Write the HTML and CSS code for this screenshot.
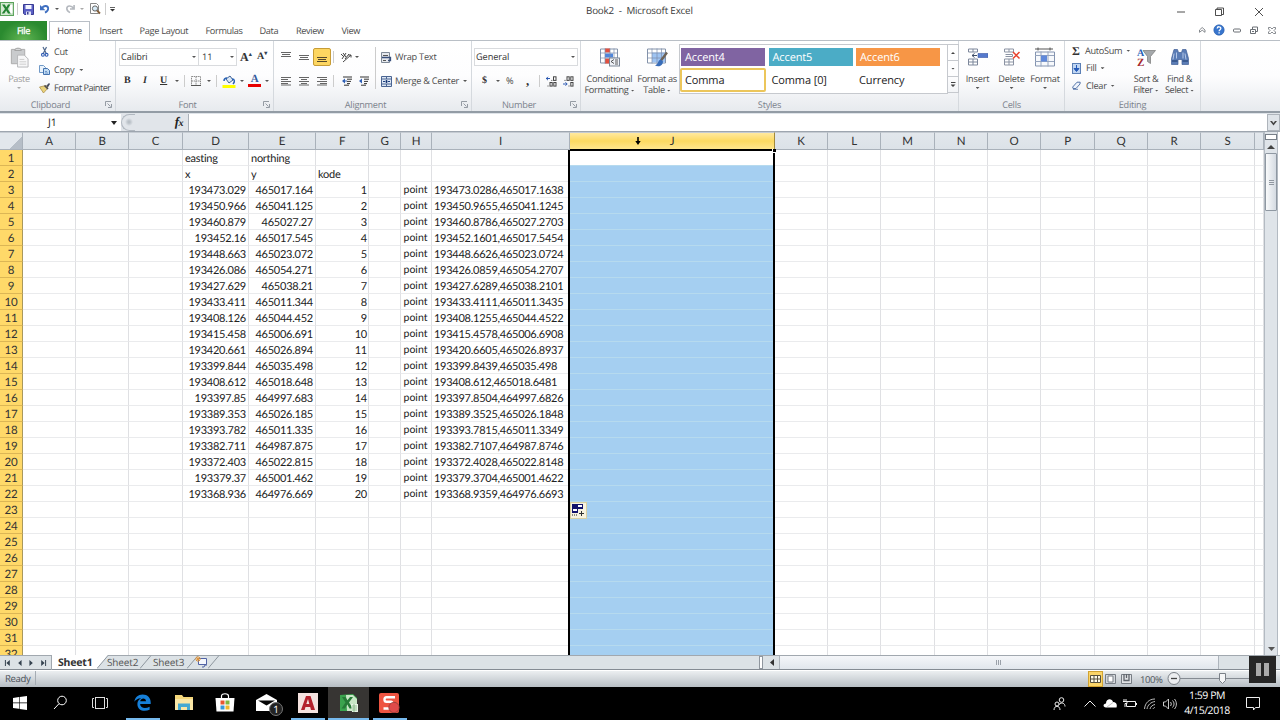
FILE: index.html
```html
<!DOCTYPE html>
<html lang="en">
<head>
<meta charset="utf-8">
<title>Book2 - Microsoft Excel</title>
<link rel="stylesheet" href="styles.css">
</head>
<body>
<div class="app">
  <header class="titlebar">
    <div class="qat">
      <svg class="logo" width="14" height="14" viewBox="0 0 14 14"><rect x=".5" y=".5" width="13" height="13" fill="#d5ead3" stroke="#5ba35c"/><path d="M9 2h4v10H9z" fill="#fff" stroke="#7cb67c" stroke-width=".6"/><path d="M2 2.500h2.800L6.300 5.300 8 2.500h2.500L7.600 7l3.200 4.500H8L6.200 8.600 4.300 11.500H1.700L5 7z" fill="#238332"/></svg>
      <i class="sep q1"></i>
      <svg class="q2" width="11" height="11" viewBox="0 0 11 11"><path d="M.5.5h10v10h-9l-1-1z" fill="#5a5fc4" stroke="#393c94"/><path d="M2.500 1h6v4h-6z" fill="#f3f5ff"/><path d="M3 7.500h5V11H3z" fill="#dfe3f5"/><path d="M4 8h1.500v2.500H4z" fill="#3c4091"/></svg>
      <svg class="q3" width="10" height="10" viewBox="0 0 11 11"><path d="M0 1v6h6z" fill="#3f6fc0"/><path d="M2 5C4 1 9 1.500 9 5c0 2-1.500 3.500-3.500 4.500" fill="none" stroke="#3f6fc0" stroke-width="2"/></svg>
      <i class="caret q4"></i>
      <svg class="q5" width="10" height="10" viewBox="0 0 11 11"><path d="M10 1v4.500H5.500M9.500 5C7 1 2 1.500 2 5c0 2 1.500 3.500 3.500 4.500" fill="none" stroke="#b5b9bf" stroke-width="1.800"/></svg>
      <i class="caret dim q6"></i>
      <svg class="q7" width="12" height="12" viewBox="0 0 12 12"><path d="M1.500.5h6l2 2v8h-8z" fill="#fff" stroke="#888"/><circle cx="6" cy="5.500" r="2.600" fill="#d9ecf8" stroke="#666"/><path d="M8 7.500l3 3" stroke="#84603b" stroke-width="1.800"/></svg>
      <i class="sep q8"></i>
      <svg class="q9" width="5" height="5" viewBox="0 0 6 6"><path d="M0 .5h6" stroke="#333"/><path d="M0 2.500h6l-3 3z" fill="#333"/></svg>
    </div>
    <div class="title">Book2&nbsp; -&nbsp; Microsoft Excel</div>
    <svg class="winctl" width="88" height="20" viewBox="0 0 88 20" fill="none" stroke="#222"><path d="M1 12h8M39.500 9.500h6v6h-6zM41 9V8h6.500v6.500H46M79 8l8 8M87 8l-8 8" stroke-width=".8"/></svg>
  </header>

  <nav class="tabs">
    <span class="file">File</span><span class="home">Home</span><span class="t-insert">Insert</span><span class="t-layout">Page Layout</span><span class="t-formulas">Formulas</span><span class="t-data">Data</span><span class="t-review">Review</span><span class="t-view">View</span>
    <svg class="docctl" width="80" height="20" viewBox="0 0 80 20" fill="none" stroke="#6a6f75"><path d="M1.500 10l2.700-2.500L7 10v2.300L4.200 10.200 1.500 12.300z" stroke-width=".8"/><circle cx="21" cy="10" r="5.200" fill="#3775cd" stroke="#265ba8" stroke-width=".6"/><path d="M19.200 8.500c.1-2.400 3.700-2.200 3.600 0 0 1.200-1.700 1.200-1.700 2.800M21.100 12.300v1.200" stroke="#fff" stroke-width="1.300"/><rect x="35.500" y="9" width="7" height="3" rx="1"/><path d="M52.500 9.500h5v4h-5zM54.500 9V7h5v4.500H58M54 11.500h2" /><path d="M70.500 7.500h2l1.500 1.500 1.500-1.500h2v1.500L76 10.500l1.500 1.500v1.500h-2L74 12l-1.500 1.500h-2V12l1.500-1.500L70.500 9z" stroke-width=".8"/></svg>
  </nav>

  <section class="ribbon">
    <div class="group g-clip">
      <div class="body">
        <div class="big paste">
          <svg width="20" height="22" viewBox="0 0 20 22"><path d="M2 2.500h14v15H2z" fill="#c9cbcd" stroke="#aaa"/><path d="M5.500 3.500c0-3 7-3 7 0z" fill="#e3e4e5" stroke="#999"/><path d="M8.500 8.500h7l4 4v8.500h-11z" fill="#f7f7f8" stroke="#b4b6b8"/><path d="M10.500 13h5M10.500 15.500h7M10.500 18h7" stroke="#ccc"/></svg>
          <span>Paste</span><i class="caret dim"></i>
        </div>
        <div class="stack">
          <div class="cmd"><svg width="13" height="12" viewBox="0 0 13 12"><path d="M5 1l3 6M8.500 1L5.500 7" stroke="#50698e" stroke-width="1.200"/><circle cx="4.900" cy="8.800" r="1.400" fill="none" stroke="#2d5ab2" stroke-width="1.100"/><circle cx="8.600" cy="8.800" r="1.400" fill="none" stroke="#2d5ab2" stroke-width="1.100"/></svg><span>Cut</span></div>
          <div class="cmd"><svg width="13" height="12" viewBox="0 0 13 12"><path d="M1.500 1.500h4l2 2v5h-6z" fill="#eaf3fc" stroke="#7099c7"/><path d="M5.500 4.500h4l2 2v4H5.500z" fill="#c3ddf4" stroke="#4573af"/><path d="M7 7.500h2M7 9h3" stroke="#5a85bd" stroke-width=".8"/></svg><span>Copy</span><i class="caret"></i></div>
          <div class="cmd"><svg width="13" height="12" viewBox="0 0 13 12"><path d="M8 4l3-3 1 1-2.500 4z" fill="#444b60"/><path d="M1.500 5L8 3.500l2 2.500-4.500 5z" fill="#ead37b" stroke="#a58640" stroke-width=".7"/><path d="M6.500 3.500L10 7" stroke="#4d4d55" stroke-width="1.600"/></svg><span class="painter">Format Painter</span></div>
        </div>
      </div>
      <div class="label">Clipboard<svg class="launch" width="7" height="7" viewBox="0 0 7 7"><path d="M.5 5V.5H6M2.500 2.500l3 3M6.500 3v3.500H3" fill="none" stroke="#8b929b" stroke-width=".9"/></svg></div>
    </div>

    <div class="group g-font">
      <div class="body col">
        <div class="row">
          <div class="combo c-font"><span>Calibri</span><i class="caret"></i></div><div class="combo c-size"><span>11</span><i class="caret"></i></div>
          <span class="serif grow">A<sup>▴</sup></span><span class="serif shrink">A<sup>▾</sup></span>
        </div>
        <div class="row">
          <b class="serif b1">B</b><b class="serif it">I</b><b class="serif un">U</b><i class="caret m1"></i><i class="sep m2"></i>
          <svg class="m3" width="10" height="10" viewBox="0 0 10 10"><path d="M.5.5h9v9h-9zM5 .5v9M.5 5h9" fill="none" stroke="#8b8b8b" stroke-dasharray="1.500 .7"/><path d="M0 9.500h10" stroke="#555"/></svg><i class="caret m4"></i><i class="sep m5"></i>
          <svg class="m6" width="14" height="13" viewBox="0 0 14 13"><path d="M4 4l4-3 3 4-4 3z" fill="#dce8f5" stroke="#3c6096"/><path d="M2 6c0-3 3-3 3-3M10 4c3 0 3 3 1 5" stroke="#2962b5" stroke-width="1.500" fill="none"/><path d="M.5 10h13v3H.5z" fill="#ff0"/></svg><i class="caret m7"></i>
          <span class="fontcolor">A</span><i class="caret m8"></i>
        </div>
      </div>
      <div class="label">Font<svg class="launch" width="7" height="7" viewBox="0 0 7 7"><path d="M.5 5V.5H6M2.500 2.500l3 3M6.500 3v3.500H3" fill="none" stroke="#8b929b" stroke-width=".9"/></svg></div>
    </div>

    <div class="group g-align">
      <div class="body">
        <div class="col aligns">
          <div class="row">
            <svg class="al" width="18" height="18" viewBox="0 0 18 18"><path d="M4 4.500h10M5 6.500h8M4 8.500h10" stroke="#666"/></svg>
            <svg class="al" width="18" height="18" viewBox="0 0 18 18"><path d="M4 7.500h10M5 9.500h8M4 11.500h10" stroke="#666"/></svg>
            <svg class="al on" width="18" height="18" viewBox="0 0 18 18"><rect x=".5" y=".5" width="17" height="17" rx="1.500" fill="#fdd661" stroke="#c79c36"/><path d="M4 9.500h10M5 11.500h8M4 13.500h10" stroke="#55482a"/></svg>
            <i class="sep a1"></i>
            <svg class="a2" width="12" height="12" viewBox="0 0 12 12"><path d="M1 3l3 3M3 2l3 4M2 8l4-6M5 8l4-5M3 11L11 4M8.500 4H11v2.500" stroke="#444" fill="none"/></svg><i class="caret a3"></i>
          </div>
          <div class="row">
            <svg class="al" width="18" height="18" viewBox="0 0 18 18"><path d="M4 5.500h10M4 7.500h7M4 9.500h10M4 11.500h7M4 13h10" stroke="#666"/></svg>
            <svg class="al" width="18" height="18" viewBox="0 0 18 18"><path d="M4 5.500h10M6 7.500h6M4 9.500h10M6 11.500h6M4 13h10" stroke="#666"/></svg>
            <svg class="al" width="18" height="18" viewBox="0 0 18 18"><path d="M4 5.500h10M7 7.500h7M4 9.500h10M7 11.500h7M4 13h10" stroke="#666"/></svg>
            <i class="sep a1"></i>
            <svg class="a4" width="11" height="10" viewBox="0 0 11 10"><path d="M1 1h9M5 3.200h5M5 5.400h4M5 7.600h3M2 9.200h5" stroke="#333"/><path d="M0 5l3-2.500v5z" fill="#2e5fb5"/><path d="M3 5h2" stroke="#2e5fb5"/></svg>
            <svg class="a5" width="11" height="10" viewBox="0 0 11 10"><path d="M1 1h9M5 3.200h5M5 5.400h4M5 7.600h3M2 9.200h5" stroke="#333"/><path d="M0 5l3-2.500v5z" fill="#2e5fb5"/></svg>
          </div>
        </div>
        <i class="sep tall"></i>
        <div class="col wraps">
          <div class="row"><svg width="11" height="11" viewBox="0 0 11 11"><path d="M.5.5h8v10h-8z" fill="#e6e9ee" stroke="#7d8896"/><path d="M2 3.500h5M2 8.500h3" stroke="#555"/><path d="M1 5.500h8.500v3H7" fill="none" stroke="#384f7c" stroke-width="1.300"/></svg><span>Wrap Text</span></div>
          <div class="row"><svg width="11" height="11" viewBox="0 0 11 11"><path d="M.5.5h10v10H.5z" fill="#dce6f4" stroke="#4a6492"/><path d="M.5 3h10M.5 8h10M5.500 .5v2.500M5.500 8v2.500" stroke="#4a6492"/><path d="M2 5.500h2M7 5.500h2M5 4.500h1v2H5z" stroke="#1c3f7f"/></svg><span>Merge &amp; Center</span><i class="caret"></i></div>
        </div>
      </div>
      <div class="label">Alignment<svg class="launch" width="7" height="7" viewBox="0 0 7 7"><path d="M.5 5V.5H6M2.500 2.500l3 3M6.500 3v3.500H3" fill="none" stroke="#8b929b" stroke-width=".9"/></svg></div>
    </div>

    <div class="group g-num">
      <div class="body col">
        <div class="row"><div class="combo c-num"><span>General</span><i class="caret"></i></div></div>
        <div class="row"><b class="serif n1">$</b><i class="caret n2"></i><span class="n3">%</span><b class="serif n4">,</b><i class="sep n5"></i>
          <svg class="d1" width="11" height="11" viewBox="0 0 11 11" fill="none" stroke="#444"><path d="M0 2.500h4M2 .8L.3 2.500 2 4.200" stroke="#2c59b2"/><rect x="7.500" y=".8" width="2.500" height="3.600"/><rect x="4" y="6.500" width="2.200" height="3.600"/><rect x="7.800" y="6.500" width="2.200" height="3.600"/><path d="M5.300 4.400h1M1.500 10h1"/></svg>
          <svg class="d2" width="11" height="11" viewBox="0 0 11 11" fill="none" stroke="#444"><rect x="4" y=".8" width="2.200" height="3.600"/><rect x="7.800" y=".8" width="2.200" height="3.600"/><path d="M1.500 4.400h1M5.500 10h1"/><rect x="7.800" y="6.500" width="2.200" height="3.600"/><path d="M0 8h4M2.500 6.300L4.200 8 2.500 9.700" stroke="#2c59b2"/></svg></div>
      </div>
      <div class="label">Number<svg class="launch" width="7" height="7" viewBox="0 0 7 7"><path d="M.5 5V.5H6M2.500 2.500l3 3M6.500 3v3.500H3" fill="none" stroke="#8b929b" stroke-width=".9"/></svg></div>
    </div>

    <div class="group g-style">
      <div class="body">
        <div class="big cf">
          <svg width="22" height="20" viewBox="0 0 22 20"><path d="M1.500 1.500h17v14h-17z" fill="#fff" stroke="#8493aa"/><path d="M6 1h5v4H6zM6 11h5v5H6z" fill="#e3503f"/><path d="M6 6h8v4H6z" fill="#4d86dd"/><path d="M1 5.500h18M1 10.500h18M6 1v15M11 1v15M15 1v15" stroke="#7b8cac" stroke-width=".7"/><rect x="10.500" y="10.500" width="10" height="8" fill="#eef1f6" stroke="#7d8797"/><path d="M15 12l-3 2 3 2M16 12.500h3M16 14.500h3M16 16.500h3" stroke="#333" fill="none" stroke-width=".8"/></svg>
          <span>Conditional</span><span>Formatting <i class="caret"></i></span>
        </div>
        <div class="big ft">
          <svg width="22" height="20" viewBox="0 0 22 20"><path d="M1.500 1.500h18v14h-18z" fill="#fff" stroke="#8493aa"/><path d="M6 5h13v10H6z" fill="#9fc4f2"/><path d="M1 5.500h19M1 10.500h19M6 1v15M11 1v15M15.500 1v15" stroke="#7b8cac" stroke-width=".7"/><path d="M21 5l-6 8" stroke="#6d6257" stroke-width="2.400"/><path d="M15 12c-3 0-2 4-6 6 4 2 8 0 8-4z" fill="#386cb8"/></svg>
          <span>Format as</span><span>Table <i class="caret"></i></span>
        </div>
        <div class="gallery">
          <div class="sw purple">Accent4</div><div class="sw teal">Accent5</div><div class="sw orange">Accent6</div>
          <div class="sw picked">Comma</div><div class="sw">Comma [0]</div><div class="sw">Currency</div>
        </div>
        <div class="spin"><i><b class="up"></b></i><i><b></b></i><i><b class="more"></b></i></div>
      </div>
      <div class="label">Styles</div>
    </div>

    <div class="group g-cells">
      <div class="body">
        <div class="big ins"><svg width="20" height="20" viewBox="0 0 20 20"><path d="M.5 1.500h9v3h-9zM5 1.500v3M.5 11.500h9v6h-9zM5 11.500v6M.5 14.500h9" fill="#fff" stroke="#7d879b"/><path d="M10 6h10v4H10z" fill="#5579cd" stroke="#3b58a2" stroke-width=".6"/><path d="M4 8h5M6.500 6L4 8l2.500 2" fill="none" stroke="#3e4d68"/></svg><span>Insert</span><i class="caret"></i></div>
        <div class="big del"><svg width="20" height="20" viewBox="0 0 20 20"><path d="M2.500 1.500h9v3h-9zM7 1.500v3M2.500 11.500h9v6h-9zM7 11.500v6M2.500 14.500h9M3.500 7h7v2h-7" fill="#fff" stroke="#8b93a3"/><path d="M11 4.500l6.500 6.500M17.500 4.500L11 11" stroke="#e8402c" stroke-width="1.500"/></svg><span>Delete</span><i class="caret"></i></div>
        <div class="big fmt"><svg width="22" height="20" viewBox="0 0 22 20"><path d="M1 1.500h18M4 0v3M16 0v3" stroke="#555"/><path d="M1.500 4.500h19v14h-19z" fill="#f7f9fc" stroke="#8494b0"/><path d="M1 8h19M1 14h19M7 4v15M14 4v15" stroke="#96a4bd"/><path d="M7 8h6v6H7z" fill="#5f88da"/></svg><span>Format</span><i class="caret"></i></div>
      </div>
      <div class="label">Cells</div>
    </div>

    <div class="group g-edit">
      <div class="body">
        <div class="stack ed">
          <div class="cmd"><b class="serif sig">Σ</b><span>AutoSum</span><i class="caret"></i></div>
          <div class="cmd"><svg width="9" height="11" viewBox="0 0 9 11"><rect x=".5" y=".5" width="8" height="10" fill="#bfd5f2" stroke="#5b7fb5"/><path d="M4.500 2v4M2 5.500h5L4.500 8.500z" fill="#2459b8" stroke="#2459b8"/></svg><span>Fill</span><i class="caret"></i></div>
          <div class="cmd"><svg width="9" height="9" viewBox="0 0 9 9"><path d="M.7 6L5 1.200h3.200L8 3 4 7.500H1z" fill="#eef3fb" stroke="#5575a9"/><path d="M1 8.300h5" stroke="#6885b5"/></svg><span>Clear</span><i class="caret"></i></div>
        </div>
        <div class="big sort"><svg width="20" height="20" viewBox="0 0 20 20"><path d="M7 3h12.500l-5 6v7l-3-2V9z" fill="#a5a8ab" stroke="#777" stroke-width=".7"/><text x="1" y="8.500" class="az a">A</text><text x="1" y="18" class="az z">Z</text></svg><span>Sort &amp;</span><span>Filter <i class="caret"></i></span></div>
        <div class="big find"><svg width="20" height="20" viewBox="0 0 20 20"><path d="M4 2h3.500l1 3h3l1-3H16l2.500 9v6h-6.500v-5H8v5H1.500v-6z" fill="#5a7cb5" stroke="#405f97" stroke-width=".7"/><path d="M4 6l-1 6M15 6l1 6M6.500 5v6M13 5v6" stroke="#b5c8e8"/><path d="M2 13.500h5.500M12.500 13.500H18" stroke="#2f4d82" stroke-width="1.500"/></svg><span>Find &amp;</span><span>Select <i class="caret"></i></span></div>
      </div>
      <div class="label">Editing</div>
    </div>
  </section>

  <section class="formula">
    <div class="namebox"><span>J1</span><svg width="6" height="4" viewBox="0 0 6 4"><path d="M0 0h6L3 4z" fill="#222"/></svg></div>
    <div class="fx"><i></i><em>f<small>x</small></em></div>
    <div class="entry"></div>
    <div class="expand"><svg width="7" height="6" viewBox="0 0 7 6"><path d="M0 1h2l1.500 2L5 1h2L3.500 5.500z" fill="#444"/></svg></div>
  </section>

  <main class="sheet">
    <div class="grid" id="grid"></div>
    <div class="vscroll"><div class="split"></div><div class="arr"><svg width="8" height="4"><path d="M0 4h8L4 0z" fill="#444"/></svg></div><div class="thumb"><svg width="5" height="5"><path d="M0 .5h5M0 2.500h5M0 4.500h5" stroke="#9097a0"/></svg></div><div class="arr end"><svg width="7" height="4"><path d="M0 0h7L3.500 4z" fill="#555"/></svg></div></div>
    <svg class="fill-tag" width="17" height="17" viewBox="0 0 17 17"><rect x=".5" y=".5" width="16" height="16" fill="#f7f3df" stroke="#d9d0a2"/><path d="M2 2h11v5H8v4H2z" fill="#12126b"/><path d="M8 3h4v2H8zM3 7h4v2H3z" fill="#fff"/><path d="M2 13h6" stroke="#222" stroke-dasharray="1 1"/><path d="M9 11.500h5M11.500 9v5" stroke="#333"/></svg>
    <svg class="cursor" width="6" height="8" viewBox="0 0 6 8"><path d="M2.200 0h1.600v4H5.700L3 8 .3 4h1.900z" fill="#000"/></svg>
    <i class="handle"></i>
  </main>

  <section class="sheettabs">
    <svg class="nav" width="52" height="14" viewBox="0 0 52 14" fill="#35424f"><path d="M5 4h1v6H5zM10 4v6L6.500 7zM22 4v6l-3.500-3zM30 4v6l3.500-3zM42 4v6l3.500-3zM46 4h1v6h-1z"/></svg>
    <span class="s1">Sheet1</span><svg class="slash first" width="12" height="14"><path d="M0 14L11 0H0z" fill="#fff"/><path d="M0 13.500L11 .5" stroke="#8d969f"/></svg><span class="s2">Sheet2</span><svg class="slash" width="12" height="14"><path d="M0 13.500L11 .5" stroke="#8d969f"/></svg><span class="s3">Sheet3</span><svg class="slash" width="12" height="14"><path d="M0 13.500L11 .5" stroke="#8d969f"/></svg>
    <svg class="new" width="13" height="12" viewBox="0 0 13 12"><path d="M3.500 2.500h8v6h-8z" fill="#f4f7fd" stroke="#5163a5"/><path d="M7 11h2l1-2h2" stroke="#5163a5" fill="none"/><path d="M3 0v6M0 3h6M1 1l4 4M5 1L1 5" stroke="#e0953c"/></svg><svg class="slash" width="12" height="14"><path d="M0 13.500L11 .5" stroke="#8d969f"/></svg>
    <div class="hscroll"><i class="hsplit"></i><i class="left"><svg width="4" height="7"><path d="M4 0v7L0 3.500z" fill="#333"/></svg></i><div class="hthumb"><svg width="6" height="5"><path d="M.5 0v5M2.500 0v5M4.500 0v5" stroke="#9ba1a9"/></svg></div></div>
  </section>

  <footer class="status">
    <span class="ready">Ready</span>
    <div class="views">
      <svg width="15" height="16" viewBox="0 0 15 16"><rect x=".5" y=".5" width="14" height="15" fill="#fbd568" stroke="#d1a331"/><path d="M2.500 4.500h10v7h-10zM2 8h11M6 4v8M9.500 4v8" fill="#fffbe8" stroke="#57503c"/></svg>
      <svg class="v2" width="11" height="10" viewBox="0 0 11 10"><path d="M.5.5h10v9H.5z" fill="#d5d8dc" stroke="#777d84"/><path d="M3 2h5v6H3z" fill="#fff" stroke="#777d84"/></svg>
      <svg class="v3" width="11" height="10" viewBox="0 0 11 10"><path d="M.5.5h10v9H.5z" fill="#e1e3e6" stroke="#777d84"/><path d="M3 0v6.500h5V0M5.500 0v4" fill="none" stroke="#5f656c" stroke-width="1.300"/></svg>
      <span>100%</span>
      <svg class="zoom" width="84" height="16" viewBox="0 0 84 16"><path d="M13 7.500h70" stroke="#858b92"/><circle cx="7" cy="7.500" r="6" fill="#eceef0" stroke="#7b8188"/><path d="M4 7.500h6" stroke="#444" stroke-width="1.300"/><path d="M52.500 2.500h6v7l-3 3-3-3z" fill="#f5f6f7" stroke="#7b8188"/></svg>
    </div>
  </footer>

  <footer class="taskbar">
    <div class="tb start"><svg width="14" height="14" viewBox="0 0 14 14" fill="#fff"><path d="M0 2l6-.9v5.500H0zM6.600 1L14 0v6.600H6.600zM0 7.200h6v5.500L0 12zM6.600 7.200H14V14l-7.400-1z"/></svg></div>
    <div class="tb"><svg width="15" height="15" viewBox="0 0 15 15" fill="none" stroke="#fff" stroke-width="1"><circle cx="9" cy="5.500" r="4.300"/><path d="M6 8.700L1 14"/></svg></div>
    <div class="tb taskview"><svg width="16" height="14" viewBox="0 0 16 14" fill="none" stroke="#ddd"><rect x="3.500" y="1.500" width="9" height="11"/><path d="M2 2.500H.5v9H2M14 2.500h1.500v9H14"/></svg></div>
    <div class="tb run edge"><svg width="17" height="17" viewBox="0 0 17 17"><path d="M.3 7.800C1 3.300 4 .4 8.600.4c5 0 8.100 3.500 8.100 8v1.700H6.100c.2 4.300 5.600 4.800 9.500 2.600v3C10.300 18.200 3.400 16.800 3.400 10c0-2.800 1.500-4.700 3.800-5.800C3.600 4.300 1.400 6 .3 7.800zM6.200 7.300H12C12 3.500 6.800 3.600 6.200 7.300z" fill="#1680da"/></svg></div>
    <div class="tb"><svg width="18" height="15" viewBox="0 0 18 15"><path d="M0 0h7l1.500 2H18v13H0z" fill="#f5d77b"/><path d="M0 4h18v11H0z" fill="#fae7a6"/><path d="M3 15V8.500h12V15h-3v-3H6v3z" fill="#44a9d2"/></svg></div>
    <div class="tb"><svg width="20" height="19" viewBox="0 0 20 19"><path d="M6.500 6V3c0-3 7-3 7 0v3" fill="none" stroke="#fff" stroke-width="1.200"/><path d="M.5 5h19l-1 13.500h-17z" fill="#fff"/><path d="M5.500 7.500h4v4h-4z" fill="#e95630"/><path d="M10.500 7.500h4v4h-4z" fill="#80b63f"/><path d="M5.500 12.500h4v4h-4z" fill="#3998d8"/><path d="M10.500 12.500h4v4h-4z" fill="#f0b82c"/></svg></div>
    <div class="tb mail"><svg width="21" height="17" viewBox="0 0 21 17"><path d="M0 6l10.500-6L21 6v11H0z" fill="#fff"/><path d="M2 6.500h17l-8.500 5z" fill="#050505"/></svg><span class="badge">1</span></div>
    <div class="tb run"><svg width="20" height="20" viewBox="0 0 20 20"><path d="M0 0h20v20H0z" fill="#f4e2df"/><path d="M3 17L8 3h4.500L17 17h-4l-.8-3H7.500l-.9 3zM8.300 11h3L10 6z" fill="#b3212c"/></svg></div>
    <div class="tb run active"><svg width="20" height="20" viewBox="0 0 20 20"><path d="M1 2l13-1 4 4v13H1z" fill="#3ba34e"/><path d="M7 2h7l4 4v12H8z" fill="#c9e7c7"/><path d="M3 4h3.500l2 3.200L11 4h3L10 9.500l4 6h-3.500l-2.200-4L6 15.500H2.500l4-6z" fill="#267a37"/><path d="M12 11h7v8h-6z" fill="#eaf5e8"/><path d="M13 13h5M13 15h5M13 17h5M15 11v8" stroke="#70ae70" stroke-width=".7"/></svg></div>
    <div class="tb run snag"><svg width="21" height="20" viewBox="0 0 21 20"><rect width="20" height="20" rx="2" fill="#ee5441"/><path d="M16 4.200H7.500Q5.500 4.200 5.500 6.500T7.500 8.800H12Q13.500 8.800 13.500 11.500T11.500 15.500H4.500" fill="none" stroke="#fff" stroke-width="2.400"/><circle cx="15" cy="14.500" r="5.200" fill="#df4a49" stroke="#8f3c38" stroke-width=".8"/></svg></div>
    <div class="tray">
      <svg class="people" width="13" height="14" viewBox="0 0 13 14" fill="none" stroke="#eee"><circle cx="8.500" cy="3" r="2.300"/><circle cx="4" cy="7" r="2"/><path d="M6 7.500c3-3 6-1 6 2M1 13c0-5 6-5 6 0"/></svg>
      <svg class="chev" width="12" height="7" viewBox="0 0 12 7" fill="none" stroke="#eee"><path d="M.5 6.500L6 1l5.500 5.500"/></svg>
      <svg class="cloud" width="14" height="9" viewBox="0 0 14 9"><path d="M3 8.500C-.5 8.500 0 4.500 3 4.500 3-.5 9-1 10 3c3 0 4.500 2 3.500 5.500z" fill="#fff"/><path d="M4 8L10 3.500" stroke="#999" stroke-width=".6"/></svg>
      <svg class="batt" width="14" height="9" viewBox="0 0 14 9" fill="none" stroke="#eee"><path d="M4 2.500h8.500v5H3.500V5M13.500 4v2M1 0v2M3 0v2M0 2.500h4v2H2V8"/></svg>
      <svg class="wifi" width="12" height="12" viewBox="0 0 12 12" fill="none" stroke="#bbb"><path d="M.5 11C1 5 5 1 11 1M3 11c.5-4 4-7 8-7.500M6 11c.5-2.500 2.500-4 5-4.500M9 11c.5-1 1-1.500 2-1.500"/></svg>
      <svg class="vol" width="14" height="12" viewBox="0 0 14 12" fill="none" stroke="#ddd"><path d="M.5 4h2L5.500 1v10L2.500 8h-2zM7.500 4c1 1.300 1 2.700 0 4M9.500 2.500c2 2.200 2 4.800 0 7M11.500 1c2.500 3 2.500 7 0 10" stroke-width=".9"/></svg>
      <div class="clock"><span>1:59 PM</span><span>4/15/2018</span></div>
      <svg class="notif" width="14" height="14" viewBox="0 0 14 14" fill="none" stroke="#eee"><path d="M.5.500h13v10H9.500L7.500 13V10.500H.5z"/></svg>
    </div>
  </footer>
  <div class="pause"><i></i><i></i></div>
</div>
<script src="sheet.js"></script>
</body>
</html>
```
FILE: styles.css
```css
* { box-sizing: border-box; }
body { margin: 0; background: #fff; }
.app { position: relative; width: 1280px; height: 720px; overflow: hidden; display: flex; flex-direction: column; font: 9.200px/12px "Open Sans", "Noto Sans", sans-serif; letter-spacing: -.37px; color: #4c4c4c; white-space: nowrap; text-rendering: geometricPrecision; }
.app > * { flex: none; }
svg, i { display: block; flex: none; }
.caret { display: inline-block; width: 4px; height: 2px; background: #555; clip-path: polygon(0 0, 100% 0, 50% 100%); vertical-align: middle; }
.caret.dim { background: #aaa; }
.sep { width: 1px; height: 12px; background: #ccc; }
.serif { font-family: "Liberation Serif", serif; color: #333; font-size: 10px; letter-spacing: 0; }

.titlebar { height: 21px; display: flex; }
.qat { width: 586px; height: 18px; display: flex; align-items: center; }
.q1 { margin-left: 3px; } .q2 { margin-left: 5px; } .q3 { margin-left: 6px; } .q4 { margin-left: 5px; }
.q5 { margin-left: 6px; } .q6 { margin-left: 5px; } .q7 { margin-left: 5px; } .q8 { margin-left: 4px; } .q9 { margin-left: 4px; }
.title { width: 590px; line-height: 21px; color: #3a3a3a; font-size: 9.800px; letter-spacing: -.18px; }

.tabs { height: 20px; display: flex; align-items: stretch; border-bottom: 1px solid #b9bfc6; line-height: 20px; }
.tabs span { flex: none; }
.file { width: 47px; text-align: center; color: #fff; background: radial-gradient(ellipse at 50% 100%, #63b654, #2a8a2f 70%); -webkit-text-stroke: .3px #fff; }
.home { width: 41px; margin: 0 0 -1px 2px; text-align: center; background: #fff; border: 1px solid #b9bfc6; border-bottom: 0; height: 21px; line-height: 18px; }
.t-insert { margin-left: 9.500px; width: 40px; } .t-layout { width: 66px; } .t-formulas { width: 54px; } .t-data { width: 36.500px; } .t-review { width: 45.500px; } .t-view { width: 856px; }
.t-layout, .t-insert { letter-spacing: -.3px; }
.docctl { margin-top: -1px; }

.ribbon { height: 72px; display: flex; background: linear-gradient(#fff, #fdfdfe 50%, #e7eaee); border-bottom: 2px solid #939ca5; }
.group { flex: none; display: flex; flex-direction: column; border-right: 1px solid #d5d9de; }
.body { height: 56px; display: flex; }
.body > * { flex: none; }
.row > *, .cmd > * { flex: none; }
.col { display: flex; flex-direction: column; padding-top: 4px; }
.row { height: 24px; display: flex; align-items: center; }
.label { height: 14px; line-height: 15px; text-align: center; color: #7b828c; position: relative; padding-right: 14px; letter-spacing: -.25px; }
.launch { position: absolute; right: 3px; top: 4px; }
.g-clip { width: 116px; } .g-font { width: 158px; } .g-align { width: 198px; } .g-num { width: 109px; } .g-style { width: 378px; } .g-cells { width: 106px; } .g-edit { width: 136px; }
.g-style .label, .g-cells .label, .g-edit .label { padding: 0; }

.big { display: flex; flex-direction: column; align-items: center; line-height: 11px; text-align: center; }
.big > svg { margin-bottom: 5px; height: 21px; }
.big > .caret { margin-top: 3px; }
.paste { width: 38px; padding-top: 6px; color: #a0a0a0; }
.stack { padding: 2px 0 0 0; }
.cmd { height: 18px; display: flex; align-items: center; }
.cmd span { margin-left: 3px; letter-spacing: -.3px; } .cmd .caret { margin-left: 5px; }
.cmd .painter { letter-spacing: -.54px; }

.combo { height: 18px; border: 1px solid #d9dbde; background: #fff; display: flex; justify-content: space-between; align-items: center; padding: 0 2px 0 1px; color: #333; letter-spacing: -.1px; }
.c-font { width: 80px; margin-left: 3px; } .c-size { width: 38px; border-left: 0; padding-left: 3px; }
.grow { font-weight: bold; font-size: 12px; margin-left: 3px; width: 17px; } .shrink { font-weight: bold; font-size: 10px; }
.serif sup { font-size: 6px; line-height: 0; color: #345; }
.b1 { margin-left: 8px; width: 19px; } .it { font-style: italic; width: 17px; } .un { text-decoration: underline; width: 12px; }
.m1 { margin-left: 3px; } .m2 { margin-left: 5px; } .m3 { margin-left: 6px; } .m4 { margin-left: 6px; } .m5 { margin-left: 5px; } .m6 { margin-left: 5px; } .m7 { margin-left: 4px; }
.fontcolor { font: bold 11px/9px "Liberation Serif", serif; color: #34599b; border-bottom: 3px solid #e80000; width: 13px; text-align: center; margin-left: 4px; height: 12px; } .m8 { margin-left: 4px; }

.aligns { width: 101px; padding-left: 3px; }
.a1 { margin-left: 2px; } .a2 { margin-left: 6px; } .a3 { margin-left: 3px; } .a4 { margin-left: 8px; } .a5 { margin-left: 6px; }
.tall { height: 42px; margin: 6px 0 0 0; }
.wraps { padding-left: 5px; } .wraps span { margin-left: 3px; letter-spacing: -.25px; } .wraps .caret { margin-left: 4px; }

.c-num { width: 104px; margin-left: 2px; }
.n1 { margin-left: 10px; } .n2 { margin-left: 9px; } .n3 { margin-left: 6px; color: #444; width: 8px; } .n4 { margin-left: 12px; font-size: 13px; width: 4px; } .n5 { margin-left: 9px; }
.d1 { margin-left: 6px; } .d2 { margin-left: 6px; }

.cf { width: 57px; padding-top: 6px; } .ft { width: 38px; padding-top: 6px; }
.cf span { letter-spacing: -.3px; }
.gallery { width: 269px; height: 50px; margin: 3px 0 0 3px; border: 1px solid #c6c9ce; background: #fff; display: grid; grid-template-columns: 84px 84px 84px; grid-template-rows: 20px 23px; column-gap: 3.500px; row-gap: 1px; padding: 3px 0 0 1px; color: #222; font-size: 11px; letter-spacing: -.12px; }
.sw { height: 18px; line-height: 20px; padding-left: 4px; }
.picked { width: 86px; height: 24px; margin: -1px 0 0 -1px; line-height: 21px; border: 2px solid #ecc65b; border-radius: 2px; padding-left: 3px; }
.sw:nth-child(n+5) { line-height: 23px; padding-left: 3px; }
.purple { background: #8064a2; color: #fff; } .teal { background: #4bacc6; color: #fff; } .orange { background: #f79646; color: #fff; }
.spin { margin-top: 3px; width: 11px; height: 49px; display: flex; flex-direction: column; border: 1px solid #c6c9ce; border-left: 0; }
.spin i { flex: 1; display: flex; align-items: center; justify-content: center; border-bottom: 1px solid #c6c9ce; }
.spin i:last-child { border: 0; }
.spin b { width: 4px; height: 2px; background: #444; clip-path: polygon(0 0, 100% 0, 50% 100%); }
.spin .up { transform: scaleY(-1); } .spin .more { height: 5px; width: 5px; clip-path: polygon(0 0, 100% 0, 100% 20%, 0 20%, 0 50%, 100% 50%, 50% 100%, 0 50%); }

.g-cells .big { padding-top: 6px; letter-spacing: -.2px; } .ins { width: 37px; } .del { width: 31px; } .fmt { width: 36px; }
.ed { width: 63px; padding: 1px 0 0 7px; } .ed .cmd span { margin-left: 5px; } .ed .cmd { height: 17.500px; }
.ed .cmd .caret { margin-left: 4px; }
.sig { font-size: 12px; width: 8px; }
.sort { width: 36px; padding-top: 6px; } .find { width: 31px; padding-top: 6px; }
.az { font: bold 10px "Liberation Serif", serif; } .a { fill: #285db5; } .z { fill: #a5272d; font-size: 11px; }

.formula { height: 19px; display: flex; background: #dfe4e9; border-bottom: 1px solid #9ea6af; padding-top: 1px; }
.namebox { width: 121px; background: #fff; display: flex; align-items: center; padding-left: 48px; color: #222; font-size: 10.500px; letter-spacing: 0; }
.namebox span { width: 63px; }
.fx { width: 68px; display: flex; justify-content: space-between; align-items: center; border-right: 1px solid #aab1b9; background: #e1e5ea; padding-right: 5px; }
.fx i { width: 14px; height: 17px; border: 1px solid #b1b8c0; border-right: 0; border-radius: 9px 0 0 9px; background: radial-gradient(circle at 7px 7px, #b9c0c7 0 1px, #e1e5ea 4px); }
.fx em { font: italic bold 13px/16px "Liberation Serif", serif; letter-spacing: -.5px; color: #222; } .fx small { font-size: 10px; }
.entry { width: 1078px; background: #fff; } .expand { width: 13px; border: 1px solid #aeb4bb; display: flex; justify-content: center; align-items: center; }

.sheet { height: 523px; display: flex; position: relative; overflow: hidden; }
.grid { width: 1264px; flex: none; display: grid; grid-template-columns: 23px 53px 53px 54px 66px 67px 53px 32px 31px 138px 205px 53px 53px 54px 53px 53px 54px 53px 53px 54px 9px; grid-auto-rows: 16px; grid-template-rows: 18px; font: 11px/17px Lato, sans-serif; letter-spacing: -.26px; color: #222; }
.grid > div { border-right: 1px solid #dfe0e3; border-bottom: 1px solid #eaebed; overflow: hidden; white-space: nowrap; padding: 0 2px; }
.grid > .ch { background: linear-gradient(#e2e7ec, #dce2e8); border-color: #a9b1ba; border-top: 1px solid #c5cbd2; text-align: center; color: #333; font-size: 11.500px; line-height: 18px; }
.grid > .ch.sel { background: linear-gradient(#ffe99f, #fcd961 50%, #ffe68d); border-right-color: #a28a3c; border-bottom-color: #000; }
.grid > .corner { background: linear-gradient(135deg, #e2e7ec 68%, #b6bec7 68%); }
.grid > .rh { background: #ffd969; border-color: #dcb655; border-right-color: #a9985c; text-align: center; padding: 0; color: #333; font-size: 11.500px; }
.grid > .num { text-align: right; letter-spacing: -.25px; }
.grid > .num.f { padding-right: 1px; }
.grid > .pt { padding: 0 1px 0 0; text-align: center; font-size: 10.500px; letter-spacing: 0; }
.grid > .j { background: #a5cff1; border: 0; box-shadow: inset -2px 0 #000, inset 0 -1px #b6daee; }
.grid > .j.first { background: #fff; border-top: 1px solid #000; }
.grid > .i { border: 0; box-shadow: inset -2px 0 #000, inset 0 -1px #eaebed; }
.grid > .ch.i { border: 1px solid #a9b1ba; border-left: 0; border-top-color: #c5cbd2; box-shadow: none; }
.fill-tag { position: absolute; left: 570px; top: 370px; }
.cursor { position: absolute; left: 635px; top: 5px; }
.handle { position: absolute; left: 772px; top: 17px; width: 4px; height: 4px; background: #000; border: 1px solid #fff; border-width: 0 0 1px 1px; }
.vscroll { width: 14px; margin-right: 2px; flex: none; display: flex; flex-direction: column; background: #dfe4e9; border: 1px solid #b3bac2; border-width: 0 1px; }
.split { height: 6px; border: 1px solid #777f88; background: #fff; margin-top: 2px; } .arr { height: 13px; display: flex; align-items: center; justify-content: center; }
.thumb { height: 58px; border: 1px solid #8f98a2; border-radius: 1px; background: linear-gradient(90deg, #f9fafb, #d5dbe2); display: flex; align-items: center; justify-content: center; } .end { margin-top: auto; }

.sheettabs { height: 15px; background: #dce2e6; display: flex; border-bottom: 1px solid #848b93; border-top: 1px solid #a1a8af; line-height: 13px; font-size: 10px; letter-spacing: -.15px; color: #555; }
.sheettabs > * { flex: none; }
.nav { border-right: 1px solid #a1a8af; } .s1 { background: #fff; font: bold 10.500px/16px "Noto Sans", sans-serif; width: 45px; padding-left: 6px; margin-top: -1px; letter-spacing: -.2px; color: #333; height: 14px; }
.s2 { width: 33px; margin-left: -2px; } .s3 { width: 34px; margin-left: 1px; } .slash { margin-top: -1px; } .new { margin: 0 0 0 -4px; }
.hscroll { width: 521px; margin-left: auto; display: flex; }
.hsplit { width: 4px; border: 1px solid #8f969e; background: #fff; margin-right: 7px; } .left { width: 9px; padding-top: 3px; }
.hthumb { width: 440px; background: linear-gradient(#f4f6f9, #e1e6ec); border: 1px solid #adb4bc; border-width: 0 1px; display: flex; align-items: center; justify-content: center; }

.status { height: 17px; background: linear-gradient(#eceff1, #b7bec4); border-top: 1px solid #fff; display: flex; justify-content: space-between; line-height: 15px; color: #4c5259; }
.ready { width: 36px; padding-left: 5px; height: 14px; border-right: 1px solid #a5acb3; font-size: 9.600px; letter-spacing: -.35px; }
.views { width: 192px; display: flex; align-items: center; } .v2 { margin-left: 2px; } .v3 { margin-left: 5px; } .views span { margin-left: 8px; width: 24px; letter-spacing: -.45px; font-size: 9.500px; } .zoom { margin-left: 3px; }

.taskbar { height: 33px; background: #000; display: flex; }
.tb { width: 41px; display: flex; align-items: center; justify-content: center; position: relative; flex: none; border-bottom: 2px solid transparent; }
.start { width: 40px; } .taskview { padding-right: 4px; } .mail { width: 42px; }
.run::after { content: ""; position: absolute; left: 4px; right: 3px; bottom: -2px; height: 2px; background: #76b9ed; }
.active { background: #373533; } .active.run::after { left: 0; right: 0; }
.badge { position: absolute; left: 24px; top: 15px; width: 14px; height: 14px; border: 1px solid #777; border-radius: 50%; background: #222; color: #fff; font-size: 10px; line-height: 12px; text-align: center; letter-spacing: 0; }
.tray { flex: 1; display: flex; justify-content: flex-end; align-items: center; color: #fff; padding-right: 20px; }
.chev { margin-left: 18px; } .cloud { margin-left: 7px; } .batt { margin-left: 6px; } .wifi { margin-left: 7px; } .vol { margin-left: 7px; }
.clock { display: flex; flex-direction: column; align-items: center; width: 48px; margin-left: 6px; padding-top: 1px; font: 10.500px/15px "Open Sans", sans-serif; letter-spacing: -.45px; } .notif { margin-left: 15px; }
.pause { position: absolute; left: 1249px; top: 656px; width: 27px; height: 27px; background: #262626; display: flex; justify-content: center; align-items: center; gap: 3px; } .pause i { width: 5px; height: 13px; background: #aaa; }
```
FILE: sheet.js
```js
const points = `193473.029 465017.164 193473.0286,465017.1638
193450.966 465041.125 193450.9655,465041.1245
193460.879 465027.27 193460.8786,465027.2703
193452.16 465017.545 193452.1601,465017.5454
193448.663 465023.072 193448.6626,465023.0724
193426.086 465054.271 193426.0859,465054.2707
193427.629 465038.21 193427.6289,465038.2101
193433.411 465011.344 193433.4111,465011.3435
193408.126 465044.452 193408.1255,465044.4522
193415.458 465006.691 193415.4578,465006.6908
193420.661 465026.894 193420.6605,465026.8937
193399.844 465035.498 193399.8439,465035.498
193408.612 465018.648 193408.612,465018.6481
193397.85 464997.683 193397.8504,464997.6826
193389.353 465026.185 193389.3525,465026.1848
193393.782 465011.335 193393.7815,465011.3349
193382.711 464987.875 193382.7107,464987.8746
193372.403 465022.815 193372.4028,465022.8148
193379.37 465001.462 193379.3704,465001.4622
193368.936 464976.669 193368.9359,464976.6693`.split("\n").map(line => line.split(" "));
const grid = document.getElementById("grid");
const columns = [..."ABCDEFGHIJKLMNOPQRS", ""];

function cell(text, classes) {
  const el = document.createElement("div");
  el.textContent = text;
  el.className = classes.trim();
  grid.append(el);
}

cell("", "ch corner");
columns.forEach(c => cell(c, "ch " + (c === "J" ? "sel" : c.toLowerCase())));
for (let r = 1; r <= 32; r++) {
  cell(r, "rh");
  const values = {};
  if (r === 1) Object.assign(values, { D: "easting", E: "northing" });
  if (r === 2) Object.assign(values, { D: "x", E: "y", F: "kode" });
  const p = points[r - 3];
  if (p) Object.assign(values, { D: p[0], E: p[1], F: r - 2, H: "point", I: p[2] });
  columns.forEach(c => {
    let cls = c.toLowerCase();
    if (p && "DEF".includes(c) && c) cls += " num";
    if (c === "H") cls += " pt";
    if (c === "J" && r === 1) cls += " first";
    cell(values[c] ?? "", cls);
  });
}
```
